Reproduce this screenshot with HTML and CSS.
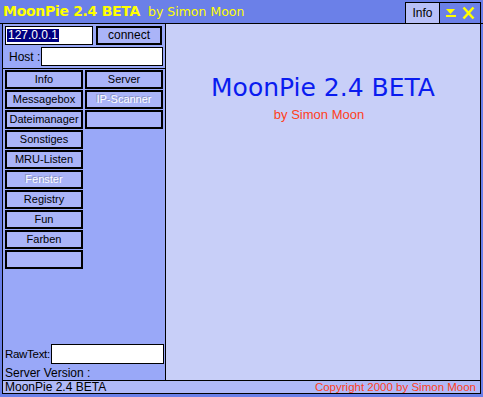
FILE: index.html
```html
<!DOCTYPE html>
<html lang="de">
<head>
    <meta charset="UTF-8">
    <title>MoonPie 2.4 BETA</title>
    <link rel="stylesheet" href="styles.css">
</head>
<body>
<div class="window">
    <div class="titlebar">
        <div class="title"><b>MoonPie 2.4 BETA</b> by Simon Moon</div>
        <div class="title-tools">
            <div class="info-btn">Info</div>
            <svg class="tool-icons" width="40" height="20" viewBox="0 0 40 20">
                <!-- minimieren -->
                <polygon points="6,6 15,6 10.5,11" fill="#ffff00"/>
                <rect x="6" y="12" width="10" height="2" fill="#ffff00"/>
                <!-- schliessen -->
                <path d="M23.5 4.5 L33.5 15.5 M33.5 4.5 L23.5 15.5" stroke="#ffff00" stroke-width="2.6" fill="none"/>
            </svg>
        </div>
    </div>

    <div class="main">
        <div class="sidebar">
            <div class="connect-area">
                <div class="conn-row">
                    <div class="field ip"><span class="sel">127.0.0.1</span></div>
                    <div class="btn connect">connect</div>
                </div>
                <div class="host-row">
                    <span class="label">Host :</span>
                    <div class="field host"></div>
                </div>
            </div>

            <div class="menu">
                <div class="col">
                    <div class="btn">Info</div>
                    <div class="btn">Messagebox</div>
                    <div class="btn">Dateimanager</div>
                    <div class="btn">Sonstiges</div>
                    <div class="btn">MRU-Listen</div>
                    <div class="btn disabled">Fenster</div>
                    <div class="btn">Registry</div>
                    <div class="btn">Fun</div>
                    <div class="btn">Farben</div>
                    <div class="btn"></div>
                </div>
                <div class="col">
                    <div class="btn">Server</div>
                    <div class="btn disabled">IP-Scanner</div>
                    <div class="btn"></div>
                </div>
            </div>

            <div class="raw-row">
                <span class="label">RawText:</span>
                <div class="field raw"></div>
            </div>
            <div class="version">Server Version :</div>
        </div>

        <div class="stage">
            <div class="big-title">MoonPie 2.4 BETA</div>
            <div class="byline">by Simon Moon</div>
        </div>
    </div>

    <div class="statusbar">
        <span>MoonPie 2.4 BETA</span>
        <span class="copy">Copyright 2000 by Simon Moon</span>
    </div>
</div>
</body>
</html>
```

FILE: styles.css
```css
* {
    box-sizing: border-box;
}
body {
    margin: 0;
    width: 483px;
    height: 397px;
    background-color: #6b80e8; /* Fensterrahmen */
    font-family: 'Liberation Sans', Arial, sans-serif;
    font-size: 11px;
    color: #000;
    overflow: hidden;
}
.window {
    display: flex;
    flex-direction: column;
    height: 397px;
}

/* Titelleiste */
.titlebar {
    height: 24px;
    display: flex;
    justify-content: space-between;
    border-bottom: 1px solid #000;
    padding-left: 3px;
}
.title {
    font-family: 'DejaVu Sans', sans-serif;
    font-size: 12.5px;
    color: #ffff00;
    line-height: 23px;
    white-space: nowrap;
}
.title b {
    font-size: 14px;
    letter-spacing: -0.3px;
    margin-right: 4px;
}
.title-tools {
    display: flex;
    margin-top: 2px;
    margin-right: 2px;
    border-top: 1px solid #000;
    border-right: 1px solid #000;
}
.info-btn {
    width: 35px;
    background-color: #b8c0f8;
    border-left: 1px solid #000;
    border-right: 1px solid #000;
    text-align: center;
    line-height: 20px;
    font-size: 12px;
}
.tool-icons {
    display: block;
}

/* Hauptbereich */
.main {
    flex: 1;
    display: flex;
    margin: 0 2px;
    border-left: 1px solid #000;
    border-right: 1px solid #000;
}
.sidebar {
    width: 163px;
    display: flex;
    flex-direction: column;
    background-color: #99a8f8;
    border-right: 1px solid #000;
}
.connect-area {
    padding: 2px;
}
.conn-row {
    display: flex;
    gap: 3px;
}
.field {
    background-color: #fff;
    border: 1px solid #000;
    height: 19px;
}
.field.ip {
    width: 88px;
    padding: 2px 1px;
}
.sel {
    display: inline-block;
    background-color: #000080;
    color: #fff;
    font-size: 12px;
    line-height: 13px;
    padding: 0 1px;
}
.btn {
    height: 19px;
    background-color: #aab4f8;
    border: 2px solid #000;
    text-align: center;
    line-height: 15px;
    white-space: nowrap;
}
.btn.connect {
    width: 66px;
    font-size: 12px;
}
.host-row {
    display: flex;
    align-items: center;
    margin-top: 2px;
}
.label {
    font-size: 12px;
}
.host-row .label {
    width: 36px;
    padding-left: 4px;
}
.field.host {
    width: 122px;
}
.menu {
    display: flex;
    gap: 2px;
    border-top: 1px solid #000;
    padding: 1px 2px 0 2px;
}
.col {
    width: 78px;
    display: flex;
    flex-direction: column;
    gap: 1px;
}
.btn.disabled {
    color: #fff;
    text-shadow: -1px -1px 0 #8890c0;
}
.raw-row {
    display: flex;
    align-items: center;
    margin-top: auto;
    padding-left: 2px;
}
.raw-row .label {
    width: 46px;
    font-size: 11.5px;
    letter-spacing: -0.3px;
}
.field.raw {
    width: 113px;
    height: 20px;
}
.version {
    font-size: 12px;
    padding: 2px 0 1px 2px;
    height: 16px;
}

/* rechter Bereich */
.stage {
    flex: 1;
    background-color: #c8cff8;
    text-align: center;
    padding-top: 49px;
}
.big-title {
    font-family: 'DejaVu Sans', sans-serif;
    font-size: 25px;
    color: #0a1cf0;
    line-height: 30px;
}
.byline {
    font-size: 13px;
    color: #ff4020;
    margin-top: 4px;
    padding-right: 8px;
}

/* Statusleiste */
.statusbar {
    height: 14px;
    margin: 0 2px 3px 2px;
    border: 1px solid #000;
    background-color: #b0baf8;
    display: flex;
    justify-content: space-between;
    padding: 0 4px 0 2px;
    font-size: 12px;
    line-height: 12px;
}
.copy {
    color: #ff4020;
    font-size: 11.5px;
}
```
